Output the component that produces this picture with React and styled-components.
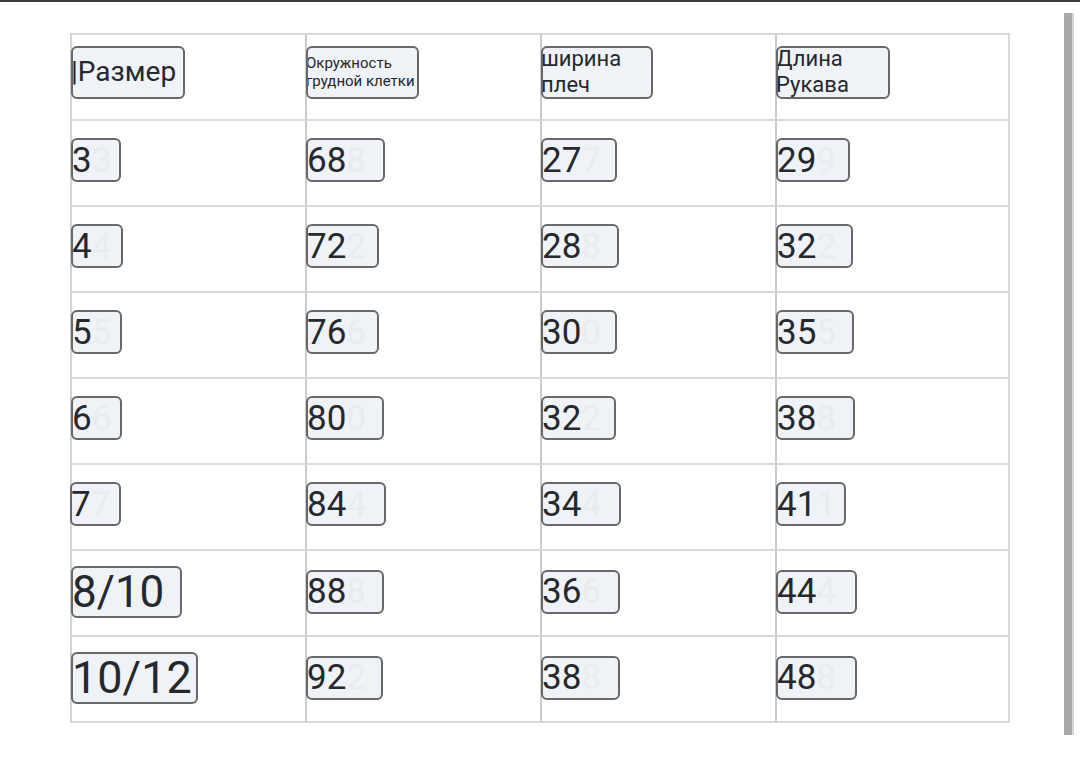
import React from "react";
import styled, { createGlobalStyle } from "styled-components";

const GlobalStyle = createGlobalStyle`
  html, body {
    margin: 0;
    padding: 0;
    background: #ffffff;
  }
  body {
    font-family: Roboto, "Noto Sans", "Liberation Sans", sans-serif;
    color: #25292d;
  }
`;

const Screen = styled.div`
  width: 1080px;
  height: 781px;
  display: flex;
  flex-direction: column;
  overflow: hidden;
  background: #fff;
`;

const TopRule = styled.div`
  height: 2px;
  background: #3d3d3d;
  flex: none;
`;

const Body = styled.div`
  display: flex;
  align-items: flex-start;
  padding-left: 70px;
`;

const Main = styled.div`
  padding-top: 31px;
`;

const Grid = styled.div`
  display: grid;
  grid-template-columns: 235px 235px 235px 233px;
  grid-auto-rows: 86px;
  border-top: 2px solid #d9d9d9;
  border-left: 2px solid #d4d4d4;
`;

const Cell = styled.div`
  display: flex;
  align-items: center;
  box-sizing: border-box;
  border-right: 2px solid ${(p) => (p.$last ? "#d9d9d9" : "#cbcbcb")};
  border-bottom: 2px solid #d9d9d9;
  padding-bottom: ${(p) => p.$lift}px;
`;

const Box = styled.div`
  display: inline-flex;
  align-items: center;
  box-sizing: border-box;
  width: ${(p) => p.$w}px;
  height: ${(p) => p.$h}px;
  margin-left: ${(p) => p.$dx}px;
  background: #eff2f7;
  border: 2px solid #686868;
  border-radius: 6px;
  font-size: ${(p) => p.$size}px;
  line-height: 1;
  white-space: nowrap;
  overflow: hidden;
`;

const Value = styled.span`
  margin-left: -1px;
`;

const Lines = styled.div`
  display: flex;
  flex-direction: column;
  line-height: ${(p) => p.$lh}px;
  margin-left: -2px;
`;

const Ghost = styled.span`
  color: #e8ebf0;
`;

const Scrollbar = styled.div`
  flex: none;
  width: 8px;
  height: 722px;
  margin-top: 11px;
  margin-left: 54px;
  background: #a9a9a9;
  border-right: 2px solid #d6d6d6;
`;

const headers = [
  { lines: ["|Размер"], w: 114, size: 28, lh: 30 },
  { lines: ["Окружность", "грудной клетки"], w: 113, size: 15, lh: 18 },
  { lines: ["ширина", "плеч"], w: 112, size: 22, lh: 26 },
  { lines: ["Длина", "Рукава"], w: 114, size: 22, lh: 26 },
];

const rows = [
  { vals: ["3", "68", "27", "29"], ws: [50, 79, 76, 74] },
  { vals: ["4", "72", "28", "32"], ws: [52, 73, 78, 77] },
  { vals: ["5", "76", "30", "35"], ws: [51, 73, 76, 78] },
  { vals: ["6", "80", "32", "38"], ws: [51, 78, 75, 79] },
  { vals: ["7", "84", "34", "41"], ws: [51, 80, 80, 70], dx: [-2, -1, -1, -1] },
  { vals: ["8/10", "88", "36", "44"], ws: [111, 78, 79, 81], big: 44 },
  { vals: ["10/12", "92", "38", "48"], ws: [127, 77, 79, 81], big: 45 },
];

const ValueBox = ({ value, w, big, dx }) => {
  const isBig = big && value.includes("/");
  const ghost = value.length <= 2 ? value.slice(-1) : "";
  return (
    <Box $w={w} $h={isBig ? 52 : 44} $size={isBig ? big : 35} $dx={dx}>
      <Value>{value}</Value>
      {ghost && <Ghost>{ghost}</Ghost>}
    </Box>
  );
};

export default function App() {
  return (
    <>
      <GlobalStyle />
      <Screen>
        <TopRule />
        <Body>
          <Main>
            <Grid>
              {headers.map((h, i) => (
                <Cell key={"h" + i} $lift={10} $last={i === 3}>
                  <Box $w={h.w} $h={53} $size={h.size} $dx={-1}>
                    <Lines $lh={h.lh}>
                      {h.lines.map((l) => (
                        <span key={l}>{l}</span>
                      ))}
                    </Lines>
                  </Box>
                </Cell>
              ))}
              {rows.map((r, ri) =>
                r.vals.map((v, ci) => (
                  <Cell
                    key={ri + "-" + ci}
                    $lift={r.big ? 3 : 6}
                    $last={ci === 3}
                  >
                    <ValueBox
                      value={v}
                      w={r.ws[ci]}
                      big={r.big}
                      dx={r.dx ? r.dx[ci] : -1}
                    />
                  </Cell>
                ))
              )}
            </Grid>
          </Main>
          <Scrollbar />
        </Body>
      </Screen>
    </>
  );
}
